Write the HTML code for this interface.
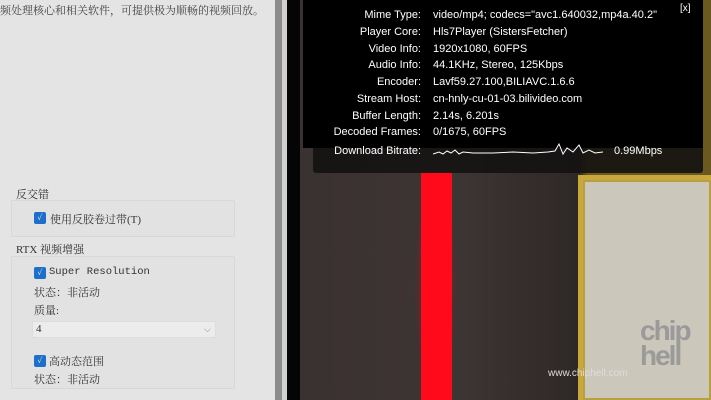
<!DOCTYPE html>
<html><head><meta charset="utf-8"><style>
*{margin:0;padding:0;box-sizing:border-box}
body{width:711px;height:400px;overflow:hidden;background:#e4e4e4;position:relative;font-family:"Liberation Serif","Noto Serif CJK SC",serif}
.abs{position:absolute}
.cn{font-size:11px;color:#333}
.box{position:absolute;border:1px solid #d8d8d8;background:#e2e2e2;border-radius:2px}
.cb{position:absolute;width:12px;height:12px;background:#1d6fc9;border-radius:2px;color:#fff;font-size:8px;line-height:12px;text-align:center}
.ov{font-family:"Liberation Sans",sans-serif;font-size:11px;color:#fff}
.row{position:absolute;height:14px}
</style></head><body>
<div class="abs cn" style="left:0;top:2px;font-size:11px;color:#444">频处理核心和相关软件，可提供极为顺畅的视频回放。</div>
<div class="abs" style="left:275px;top:0;width:7px;height:400px;background:#8c8c8c"></div>
<div class="abs" style="left:282px;top:0;width:5px;height:400px;background:#d0d0d0"></div>
<div class="abs" style="left:287px;top:0;width:13px;height:400px;background:#050505"></div>

<div class="box" style="left:11px;top:200px;width:224px;height:37px"></div>
<div class="box" style="left:11px;top:256px;width:224px;height:133px"></div>
<div class="abs cn" style="left:16px;top:186px">反交错</div>
<div class="cb" style="left:34px;top:212px">✓</div>
<div class="abs cn" style="left:50px;top:211px">使用反胶卷过带(T)</div>
<div class="abs cn" style="left:16px;top:241px">RTX 视频增强</div>
<div class="cb" style="left:34px;top:267px">✓</div>
<div class="abs cn" style="left:49px;top:266px;font-family:'Liberation Mono',monospace;font-size:10.5px">Super Resolution</div>
<div class="abs cn" style="left:34px;top:284px">状态：非活动</div>
<div class="abs cn" style="left:34px;top:302px">质量:</div>
<div class="abs" style="left:32px;top:321px;width:184px;height:17px;background:#ececec;border:1px solid #ddd"></div>
<div class="abs cn" style="left:36px;top:323px">4</div>
<div class="abs" style="left:204px;top:324px;font-size:9px;color:#888">⌵</div>
<div class="cb" style="left:34px;top:355px">✓</div>
<div class="abs cn" style="left:49px;top:353px">高动态范围</div>
<div class="abs cn" style="left:34px;top:371px">状态：非活动</div>

<div class="abs" style="left:300px;top:0;width:411px;height:400px;background:linear-gradient(90deg,#3a3230 0%,#3d3434 40%,#2e2826 68%,#6a5a20 70%)"></div>
<div class="abs" style="left:414px;top:172px;width:44px;height:228px;background:radial-gradient(ellipse at center,rgba(255,0,20,.5),rgba(255,0,20,0) 70%)"></div>
<div class="abs" style="left:421px;top:172px;width:31px;height:228px;background:#ff0a1a"></div>
<div class="abs" style="left:578px;top:175px;width:133px;height:225px;background:#c8a83a"></div>
<div class="abs" style="left:583px;top:180px;width:128px;height:220px;background:#ccc7bb;border:2px solid #b8a040"></div>
<div class="abs ov" style="left:548px;top:368px;font-size:10px;color:#ddd">www.chiphell.com</div>
<div class="abs ov" style="left:640px;top:318px;font-size:28px;font-weight:bold;color:#9a9a9a;line-height:25px;letter-spacing:-2px">chip<br>hell</div>

<div class="abs" style="left:313px;top:120px;width:390px;height:53px;background:rgba(20,18,18,.9);border-radius:3px"></div>
<div class="abs" style="left:303px;top:0;width:400px;height:148px;background:#000"></div>
<div class="abs ov" style="left:680px;top:3px;font-size:10px">[x]</div>
<div class="ov">
<div class="row" style="left:300px;top:9px;width:121px;text-align:right">Mime Type:</div>
<div class="row" style="left:300px;top:26px;width:121px;text-align:right">Player Core:</div>
<div class="row" style="left:300px;top:43px;width:121px;text-align:right">Video Info:</div>
<div class="row" style="left:300px;top:59px;width:121px;text-align:right">Audio Info:</div>
<div class="row" style="left:300px;top:76px;width:121px;text-align:right">Encoder:</div>
<div class="row" style="left:300px;top:93px;width:121px;text-align:right">Stream Host:</div>
<div class="row" style="left:300px;top:110px;width:121px;text-align:right">Buffer Length:</div>
<div class="row" style="left:300px;top:126px;width:121px;text-align:right">Decoded Frames:</div>
<div class="row" style="left:300px;top:145px;width:121px;text-align:right">Download Bitrate:</div>
<div class="row" style="left:433px;top:9px">video/mp4; codecs="avc1.640032,mp4a.40.2"</div>
<div class="row" style="left:433px;top:26px">Hls7Player (SistersFetcher)</div>
<div class="row" style="left:433px;top:43px">1920x1080, 60FPS</div>
<div class="row" style="left:433px;top:59px">44.1KHz, Stereo, 125Kbps</div>
<div class="row" style="left:433px;top:76px">Lavf59.27.100,BILIAVC.1.6.6</div>
<div class="row" style="left:433px;top:93px">cn-hnly-cu-01-03.bilivideo.com</div>
<div class="row" style="left:433px;top:110px">2.14s, 6.201s</div>
<div class="row" style="left:433px;top:126px">0/1675, 60FPS</div>
<div class="row" style="left:614px;top:145px">0.99Mbps</div>
</div>
<svg class="abs" style="left:433px;top:142px" width="170" height="20"><path d="M0 12 L6 10 L10 12 L14 9 L18 11 L22 8 L26 12 L30 10 L40 11 L60 11 L80 10 L100 11 L115 10 L122 9 L126 2 L130 12 L134 6 L140 10 L146 3 L150 11 L156 8 L162 11 L170 10" fill="none" stroke="#fff" stroke-width="1"/></svg>
</body></html>
